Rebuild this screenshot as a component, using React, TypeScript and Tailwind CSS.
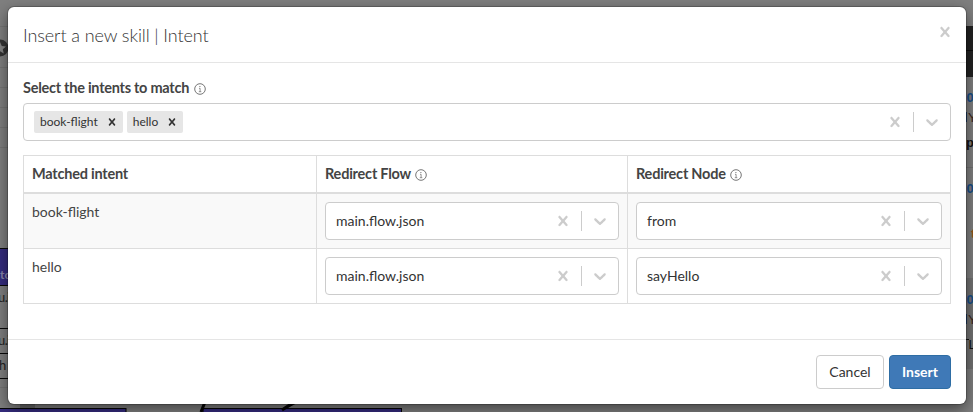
import React from 'react';

const CROSS =
  'M14.348 14.849c-0.469 0.469-1.229 0.469-1.697 0l-2.651-3.030-2.651 3.029c-0.469 0.469-1.229 0.469-1.697 0-0.469-0.469-0.469-1.229 0-1.697l2.758-3.15-2.759-3.152c-0.469-0.469-0.469-1.228 0-1.697s1.228-0.469 1.697 0l2.652 3.031 2.651-3.031c0.469-0.469 1.228-0.469 1.697 0s0.469 1.229 0 1.697l-2.758 3.152 2.758 3.15c0.469 0.469 0.469 1.229 0 1.698z';
const CHEVRON =
  'M4.516 7.548c0.436-0.446 1.043-0.481 1.576 0l3.908 3.747 3.908-3.747c0.533-0.481 1.141-0.446 1.574 0 0.436 0.445 0.408 1.197 0 1.615-0.406 0.418-4.695 4.502-4.695 4.502-0.217 0.223-0.502 0.335-0.787 0.335s-0.57-0.112-0.789-0.335c0 0-4.287-4.084-4.695-4.502s-0.436-1.17 0-1.615z';

function Glyph({ d, size }: { d: string; size: number }) {
  return (
    <svg width={size} height={size} viewBox="0 0 20 20" fill="currentColor" className="shrink-0">
      <path d={d} />
    </svg>
  );
}

function InfoIcon() {
  return (
    <svg width="12" height="12" viewBox="0 0 12 12" className="mt-[2px] shrink-0 text-[#666]">
      <circle cx="6" cy="6" r="5.3" fill="none" stroke="currentColor" strokeWidth="0.9" />
      <path d="M5 5.3h1.1v3.3M4.800 8.7h2.500" fill="none" stroke="currentColor" strokeWidth="0.7" />
      <circle cx="5.9" cy="3.5" r="0.6" fill="currentColor" />
    </svg>
  );
}

function Select({ children }: { children: React.ReactNode }) {
  return (
    <div className="flex h-[38px] items-center rounded-[4px] border border-[#ccc] bg-white text-[#333]">
      <div className="flex min-w-0 flex-1 items-center gap-1 pl-[10px]">{children}</div>
      <div className="flex items-center text-[#ccc]">
        <div className="p-2">
          <Glyph d={CROSS} size={20} />
        </div>
        <div className="h-5 w-px bg-[#ccc]" />
        <div className="p-2">
          <Glyph d={CHEVRON} size={20} />
        </div>
      </div>
    </div>
  );
}

function Tag({ label }: { label: string }) {
  return (
    <div className="flex h-[22px] items-center rounded-[2px] bg-[#e6e6e6] text-[12px]">
      <span className="pl-[6px] pr-[3px]">{label}</span>
      <span className="px-1">
        <Glyph d={CROSS} size={14} />
      </span>
    </div>
  );
}

function Backdrop() {
  return (
    <svg
      className="absolute inset-0"
      width="973"
      height="412"
      viewBox="0 0 973 412"
      fontFamily="Lato, sans-serif"
    >
      <rect width="973" height="412" fill="#7f7f7f" />
      <path d="M0 26.5h8M0 67.5h8M0 87.5h8M0 107.5h8M0 127.5h8M0 147.5h8M0 387.5h8" stroke="#747474" />
      <circle cx="0" cy="48" r="8.5" fill="#333" />
      <path d="M0 42l1.8 4 4.2.4-3.2 2.8 1 4.3L0 51.2z" fill="#858585" />
      <rect y="248" width="8" height="37" fill="#352c7f" />
      <path d="M0 248.5h8M0 285.5h8M0 328.5h8M0 353.5h8M0 378.5h8" stroke="#080808" />
      <text x="0" y="279" fontSize="12" fontWeight="700" fill="#8985aa">tc</text>
      <g fontSize="13" fill="#222" letterSpacing="-0.6">
        <text x="-2" y="302">u.i</text>
        <text x="-2" y="345">u.i</text>
      </g>
      <text x="-1" y="370" fontSize="13" fill="#222">h</text>
      <rect x="20" y="404" width="15" height="4" fill="#686868" />
      <rect x="-1" y="408.500" width="127" height="8" fill="#352c7f" stroke="#050505" />
      <rect x="203" y="408.500" width="198.500" height="8" fill="#352c7f" stroke="#050505" />
      <path d="M205 402l-4 10M296 402q-5 2-14 8" stroke="#050505" strokeWidth="3" fill="none" />
      <rect x="965" y="26" width="8" height="51" fill="#222" />
      <path d="M965 50.5h8" stroke="#0c0c0c" />
      <rect x="965" y="278" width="8" height="91" fill="#727272" />
      <path d="M965 167.500h8" stroke="#707070" />
      <g fontSize="13" fontFamily="Liberation Sans, sans-serif">
        <g fill="#174d87" fontWeight="700">
          <text x="966.5" y="102">0</text>
          <text x="966.5" y="193">0</text>
          <text x="966.5" y="304">0</text>
        </g>
        <path d="M966.5 112v10M966.5 314v10" stroke="#1c3c66" />
        <text x="968" y="122" fill="#3a2620">Y</text>
        <text x="966" y="147" fill="#111" fontWeight="700">p</text>
        <text x="971" y="238" fill="#9b5518" fontWeight="700">t</text>
        <text x="968" y="324" fill="#3a2620">Y</text>
        <path d="M965 339.500h4" stroke="#111" />
        <text x="968.5" y="349" fill="#111">L</text>
      </g>
    </svg>
  );
}

const rows = [
  { intent: 'book-flight', flow: 'main.flow.json', node: 'from' },
  { intent: 'hello', flow: 'main.flow.json', node: 'sayHello' },
];

export default function App() {
  return (
    <div className="relative h-[412px] w-[973px] overflow-hidden pl-2 pt-[7px] font-['Lato',sans-serif] text-[14px] leading-5 text-[#444]">
      <Backdrop />
      <div className="relative flex h-[397px] w-[958px] flex-col rounded-[6px] bg-white shadow-[0_5px_15px_rgba(0,0,0,0.5),0_0_0_1px_rgba(0,0,0,0.2)]">
        <header className="flex h-[56px] shrink-0 items-center justify-between border-b border-[#e5e5e5] pl-[15px] pr-[11px]">
          <h4 className="text-[18px] font-light tracking-[-0.09px] text-[#333]">Insert a new skill | Intent</h4>
          <span className="pb-[6px] text-[#ccc]">
            <Glyph d={CROSS} size={20} />
          </span>
        </header>

        <main className="flex-1 px-[15px] pt-[15px]">
          <div className="mb-[5px] flex h-5 items-center gap-[5px] text-[14.5px] font-bold tracking-[-0.26px]">
            Select the intents to match
            <InfoIcon />
          </div>
          <Select>
            <Tag label="book-flight" />
            <Tag label="hello" />
          </Select>

          <table className="mt-[14px] w-[928px] table-fixed border-separate border-spacing-0 border-l border-t border-[#ddd]">
            <colgroup>
              <col className="w-[293px]" />
              <col className="w-[311px]" />
              <col className="w-[323px]" />
            </colgroup>
            <thead>
              <tr className="text-left text-[14.5px] tracking-[-0.22px]">
                <th className="h-[38px] border-b-2 border-r border-[#ddd] px-2 py-0">Matched intent</th>
                <th className="border-b-2 border-r border-[#ddd] px-2 py-0">
                  <div className="flex items-center gap-1">
                    Redirect Flow
                    <InfoIcon />
                  </div>
                </th>
                <th className="border-b-2 border-r border-[#ddd] px-2 py-0">
                  <div className="flex items-center gap-1">
                    Redirect Node
                    <InfoIcon />
                  </div>
                </th>
              </tr>
            </thead>
            <tbody>
              {rows.map((row) => (
                <tr key={row.intent} className="align-top odd:bg-[#f9f9f9]">
                  <td className="h-[55px] border-b border-r border-[#ddd] p-2">{row.intent}</td>
                  <td className="border-b border-r border-[#ddd] p-2">
                    <Select>{row.flow}</Select>
                  </td>
                  <td className="border-b border-r border-[#ddd] p-2">
                    <Select>{row.node}</Select>
                  </td>
                </tr>
              ))}
            </tbody>
          </table>
        </main>

        <footer className="flex h-[65px] shrink-0 justify-end gap-[5px] border-t border-[#e5e5e5] px-[15px] pt-[15px]">
          <button className="h-[34px] w-[68px] rounded-[4px] border border-[#ccc] bg-white text-[#333]">Cancel</button>
          <button className="h-[34px] w-[62px] rounded-[4px] border border-[#2e6da4] bg-[#3f79b7] font-bold text-white">
            Insert
          </button>
        </footer>
      </div>
    </div>
  );
}
